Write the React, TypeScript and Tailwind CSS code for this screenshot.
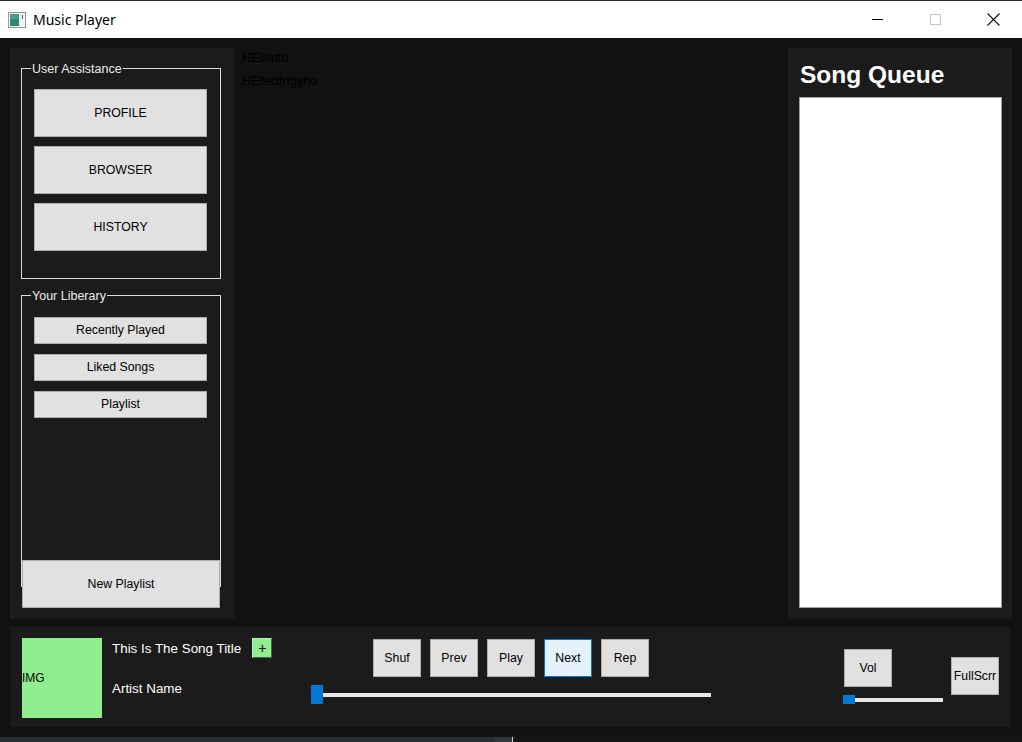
import React from 'react';

const ui = { fontFamily: '"Liberation Sans", Arial, sans-serif' };

const sideButtonsTop = ['PROFILE', 'BROWSER', 'HISTORY'];
const libraryButtons = ['Recently Played', 'Liked Songs', 'Playlist'];
const transport = ['Shuf', 'Prev', 'Play', 'Next', 'Rep'];

const WinButton: React.FC<{ label: string; className?: string }> = ({ label, className }) => (
  <button
    className={`flex items-center justify-center bg-[#e1e1e1] border border-[#adadad] text-[12.3px] text-black ${className ?? ''}`}
  >
    {label}
  </button>
);

const GroupBox: React.FC<{ title: string; className: string; children: React.ReactNode }> = ({ title, className, children }) => (
  <div className={`relative border border-[#dcdcdc] ${className}`}>
    <span className="absolute -top-[7px] left-[9px] px-[1px] bg-[#1b1b1b] text-[12.5px] leading-[14px] text-[#ececec]">
      {title}
    </span>
    {children}
  </div>
);

const Slider: React.FC<{ width: number; thumbH: number }> = ({ width, thumbH }) => (
  <div className="flex items-center" style={{ width }}>
    <div className="w-[12px] bg-[#0078d7]" style={{ height: thumbH }} />
    <div className="flex-1 h-[4px] bg-[#e7e7e7]" />
  </div>
);

export default function App() {
  return (
    <div className="w-[1022px] h-[742px] flex flex-col bg-[#111111] overflow-hidden" style={ui}>
      {/* title bar */}
      <div className="h-[38px] bg-white border-t border-[#2b2b2b] flex items-center">
        <svg width="18" height="16" viewBox="0 0 18 16" className="ml-[8px]">
          <rect x="0.5" y="0.5" width="17" height="15" fill="#f4f4f4" stroke="#9a9a9a" />
          <rect x="2" y="2" width="9" height="12" fill="#2f8a6e" />
          <rect x="2" y="2" width="9" height="5" fill="#4a9c8c" />
          <rect x="14" y="3" width="1" height="4" fill="#3a6070" />
        </svg>
        <span className="ml-[7px] text-[14px] text-black" style={{ fontFamily: '"Noto Sans", sans-serif' }}>
          Music Player
        </span>
        <div className="ml-auto flex h-full">
          <div className="w-[58px] flex items-center justify-center">
            <div className="w-[11px] h-[1px] bg-black" />
          </div>
          <div className="w-[58px] flex items-center justify-center">
            <div className="w-[11px] h-[11px] border border-[#c6c6c6]" />
          </div>
          <div className="w-[58px] flex items-center justify-center">
            <svg width="13" height="13" viewBox="0 0 13 13">
              <path d="M0.5 0.5 L12.5 12.5 M12.5 0.5 L0.5 12.5" stroke="#111" strokeWidth="1.1" />
            </svg>
          </div>
        </div>
      </div>

      <div className="flex-1 flex flex-col px-[10px] pt-[10px]">
        <div className="h-[571px] flex">
          {/* left panel */}
          <div className="w-[225px] bg-[#1b1b1b] flex flex-col pl-[11px] pt-[20px]">
            <GroupBox title="User Assistance" className="w-[200px] h-[211px] pl-[12px] pt-[20px] flex flex-col gap-[9px]">
              {sideButtonsTop.map((b) => (
                <WinButton key={b} label={b} className="w-[173px] h-[48px]" />
              ))}
            </GroupBox>
            <GroupBox title="Your Liberary" className="mt-[16px] w-[200px] h-[292px] pl-[12px] pt-[21px] flex flex-col gap-[10px]">
              {libraryButtons.map((b) => (
                <WinButton key={b} label={b} className="w-[173px] h-[27px]" />
              ))}
            </GroupBox>
            <WinButton label="New Playlist" className="relative z-10 -mt-[27px] ml-[1px] w-[198px] h-[48px]" />
          </div>

          {/* middle */}
          <div className="flex-1 pl-[7px] -mt-[1px] text-[12.5px] leading-[23px] text-black">
            <div>HEllsdfo</div>
            <div>HElledfrtgyho</div>
          </div>

          {/* right panel */}
          <div className="w-[224px] bg-[#1b1b1b] flex flex-col pl-[12px] pt-[13px]">
            <h2 className="text-[24.5px] leading-[28px] font-bold text-white">Song Queue</h2>
            <div className="-ml-[1px] mt-[8px] w-[203px] h-[511px] bg-white border border-[#a0a0a0]" />
          </div>
        </div>

        {/* player bar */}
        <div className="mt-[8px] ml-[1px] w-[1000px] h-[100px] bg-[#1b1b1b] flex">
          <div className="ml-[11px] mt-[11px] w-[80px] h-[80px] bg-[#90ee90] flex items-center text-[12px] text-black">
            IMG
          </div>
          <div className="ml-[10px] mt-[11px] w-[199px] flex flex-col">
            <div className="h-[20px] flex items-center">
              <span className="text-[13.4px] leading-[22px] pt-[2px] text-white">This Is The Song Title</span>
              <button className="ml-[11px] w-[20px] h-[20px] bg-[#90ee90] border border-[#b8f2b8] border-r-[#3d6b3d] border-b-[#3d6b3d] flex items-center justify-center text-[14px] leading-none text-black">
                +
              </button>
            </div>
            <div className="mt-[21px] h-[20px] flex items-center text-[13.4px] text-white">Artist Name</div>
          </div>
          <div className="w-[400px] flex flex-col items-center pt-[12px]">
            <div className="flex gap-[9px]">
              {transport.map((t) => (
                <WinButton
                  key={t}
                  label={t}
                  className={`w-[48px] h-[38px] ${t === 'Next' ? '!bg-[#e5f1fb] !border-[#0078d7]' : ''}`}
                />
              ))}
            </div>
            <div className="mt-[8px]">
              <Slider width={400} thumbH={19} />
            </div>
          </div>
          <div className="ml-[132px] w-[100px] flex flex-col pt-[22px]">
            <WinButton label="Vol" className="ml-[1px] w-[48px] h-[38px]" />
            <div className="mt-[8px]">
              <Slider width={100} thumbH={9} />
            </div>
          </div>
          <div className="ml-[8px] pt-[30px]">
            <WinButton label="FullScrr" className="w-[48px] h-[38px] whitespace-nowrap" />
          </div>
        </div>
      </div>

      {/* taskbar edge */}
      <div className="mt-[10px] h-[5px] flex">
        <div className="w-[493px] bg-[#2a2d34]" />
        <div className="w-[19px] bg-[#303339]" />
        <div className="w-[1px] bg-[#cfcfcf]" />
        <div className="flex-1 bg-[#161616]" />
      </div>
    </div>
  );
}
